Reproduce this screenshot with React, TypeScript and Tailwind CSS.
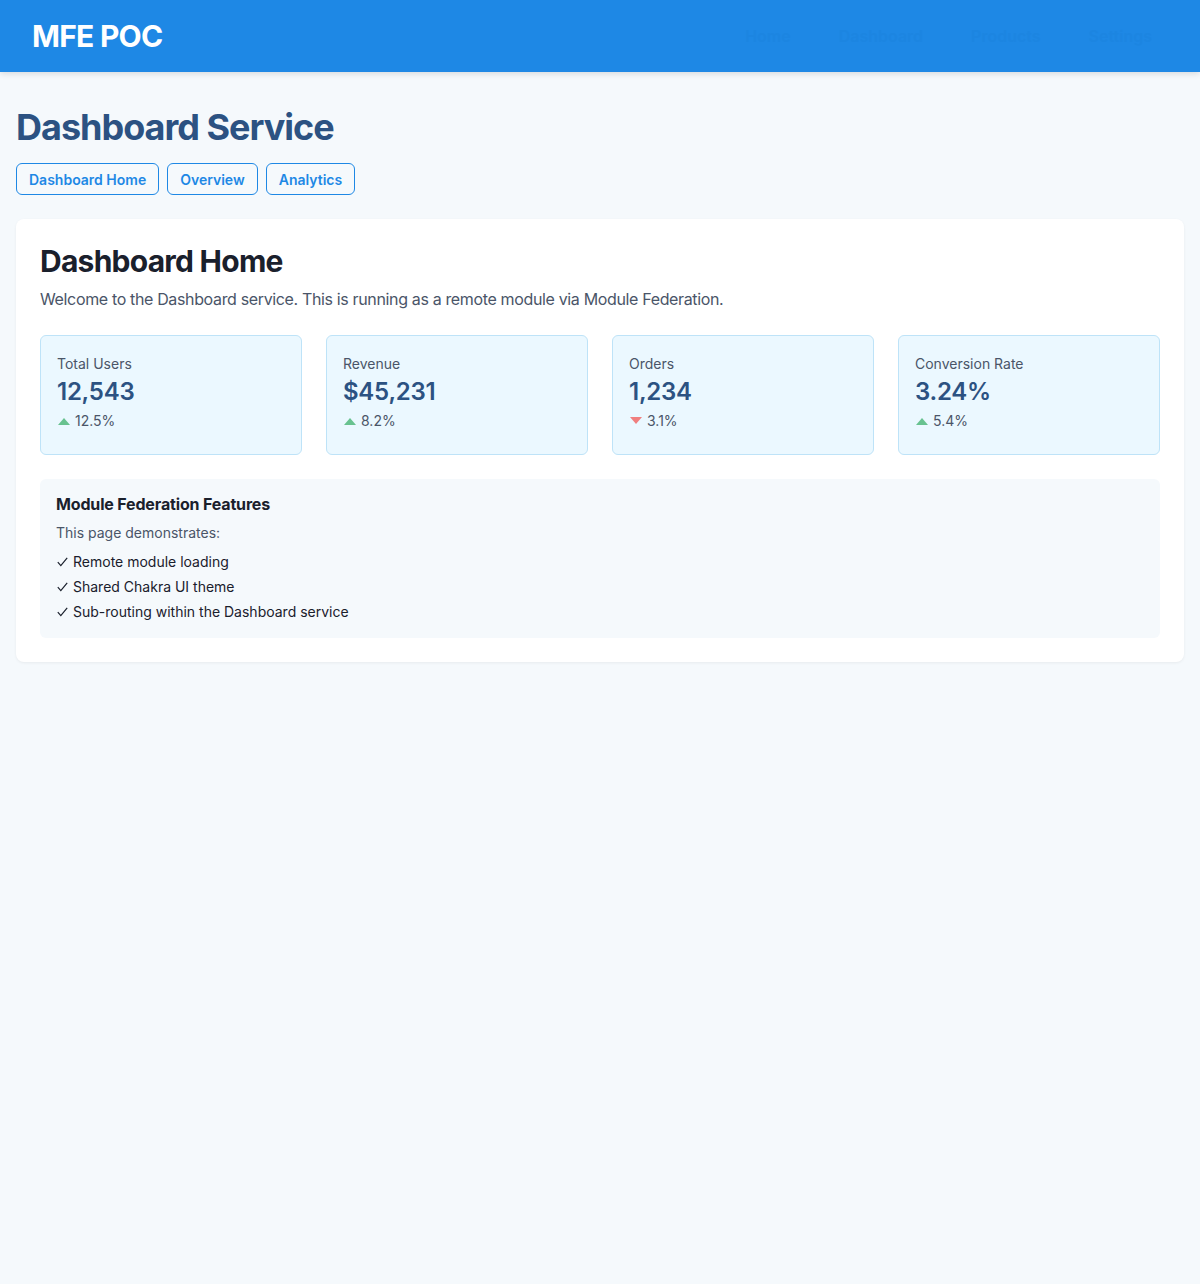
import React from "react";

const stats = [
  { label: "Total Users", value: "12,543", change: "12.5%", up: true },
  { label: "Revenue", value: "$45,231", change: "8.2%", up: true },
  { label: "Orders", value: "1,234", change: "3.1%", up: false },
  { label: "Conversion Rate", value: "3.24%", change: "5.4%", up: true },
];

function Tri({ up }: { up: boolean }) {
  return up ? (
    <svg width="14" height="14" viewBox="0 0 14 14" className="mr-[4px]">
      <path d="M1 11 L7 4 L13 11 Z" fill="#68c290" />
    </svg>
  ) : (
    <svg width="14" height="14" viewBox="0 0 14 14" className="mr-[4px]">
      <path d="M1 3 L7 10 L13 3 Z" fill="#f07f7f" />
    </svg>
  );
}

function Item({ children }: { children: React.ReactNode }) {
  return (
    <li className="flex items-center">
      <svg width="11" height="10" viewBox="0 0 11 10" className="mr-[5px] ml-[1px]">
        <path d="M0.8 5.2 L3.8 8.6 L10.2 0.8" fill="none" stroke="#1a202c" strokeWidth="1.2" />
      </svg>
      {children}
    </li>
  );
}

export default function App() {
  return (
    <div
      className="min-h-[1284px] bg-[#f5f9fc]"
      style={{ fontFamily: "Inter, 'Noto Sans', sans-serif" }}
    >
      <header className="h-[72px] bg-[#1e88e5] px-8 flex items-center justify-between shadow-[0_2px_6px_rgba(0,0,0,0.12)]">
        <div className="text-[30px] font-bold text-white tracking-[-0.025em]">MFE POC</div>
        <nav className="flex items-center gap-4">
          {["Home", "Dashboard", "Products", "Settings"].map((n) => (
            <span key={n} className="px-4 h-10 flex items-center text-[16px] font-semibold text-[#1c85e1]">
              {n}
            </span>
          ))}
        </nav>
      </header>

      <main className="p-4">
        <h1 className="mt-[17px] text-[36px] leading-[44px] font-bold text-[#2c5282] tracking-[-0.028em]">
          Dashboard Service
        </h1>
        <div className="mt-[14px] flex gap-2">
          {["Dashboard Home", "Overview", "Analytics"].map((b) => (
            <button
              key={b}
              className="h-8 px-3 rounded-md border border-[#1e88e5] text-[14px] font-semibold text-[#1e88e5] bg-transparent"
            >
              {b}
            </button>
          ))}
        </div>

        <section className="mt-6 bg-white rounded-lg shadow-[0_1px_3px_rgba(0,0,0,0.06)] p-6">
          <h2 className="text-[30px] leading-[36px] font-bold text-[#1a202c] tracking-[-0.025em]">Dashboard Home</h2>
          <p className="mt-[8px] text-[16px] leading-[24px] text-[#4a5568] tracking-[-0.022em]">
            Welcome to the Dashboard service. This is running as a remote module via Module Federation.
          </p>

          <div className="mt-6 grid grid-cols-4 gap-6">
            {stats.map((s) => (
              <div key={s.label} className="h-[120px] bg-[#ebf8ff] border border-[#bee3f8] rounded-md px-4 pt-[18px]">
                <div className="text-[14px] leading-[20px] text-[#4a5568]">{s.label}</div>
                <div className="mt-[2px] text-[24px] leading-[32px] font-semibold text-[#2c5282] tracking-[-0.01em]">
                  {s.value}
                </div>
                <div className="mt-[3px] flex items-center text-[14px] leading-[20px] text-[#4a5568]">
                  <Tri up={s.up} />
                  {s.change}
                </div>
              </div>
            ))}
          </div>

          <div className="mt-6 bg-[#f5f9fc] rounded-md p-4">
            <h3 className="text-[16px] leading-[19px] font-bold text-[#1a202c] tracking-[-0.01em]">
              Module Federation Features
            </h3>
            <p className="mt-[9px] text-[14px] leading-[20px] text-[#4a5568]">This page demonstrates:</p>
            <ul className="mt-[9px] flex flex-col gap-[5px] text-[14px] leading-[20px] text-[#1a202c]">
              <Item>Remote module loading</Item>
              <Item>Shared Chakra UI theme</Item>
              <Item>Sub-routing within the Dashboard service</Item>
            </ul>
          </div>
        </section>
      </main>
    </div>
  );
}
